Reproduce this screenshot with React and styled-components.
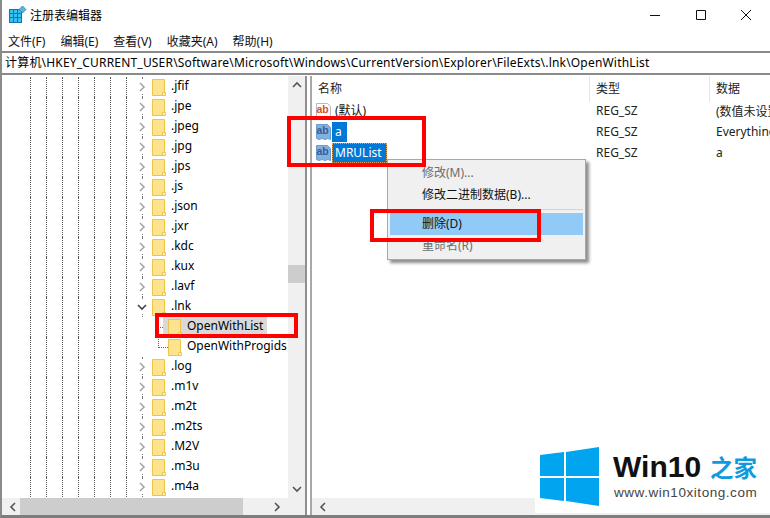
import React from "react";
import styled, { createGlobalStyle } from "styled-components";

const Global = createGlobalStyle`
  html, body { margin: 0; padding: 0; background: #fff; }
  body { font-family: "Open Sans", "Noto Sans CJK SC", sans-serif; font-size: 12px; color: #000; overflow: hidden; }
`;
const cjk = `"Noto Sans", "Noto Sans CJK SC", sans-serif`;

const Window = styled.div`
  position: relative; width: 770px; height: 518px; box-sizing: border-box; overflow: hidden;
  display: flex; flex-direction: column; background: #fff;
  border-left: 2px solid #8a8a8a; border-bottom: 3px solid #7d7d7d;
  font-family: ${cjk};
`;
const TitleBar = styled.div`display: flex; align-items: center; height: 30px; flex: none; padding: 0 1px 0 7px;`;
const AppTitle = styled.div`margin-left: 3px; font-size: 12px; flex: 1;`;
const WinBtn = styled.div`width: 45.5px; height: 30px; display: flex; align-items: center; justify-content: center;`;
const MenuBar = styled.div`display: flex; height: 21px; flex: none; align-items: center; padding-left: 6px; gap: 15px; font-size: 12px;`;
const MenuItem = styled.span`color: #111;`;
const Address = styled.div`
  flex: none; height: 20px; margin: 0 0 1px -2px; padding-left: 5px; line-height: 19px; font-size: 12px; white-space: nowrap;
  border-top: 2px solid #8a8a8a; border-bottom: 2px solid #8a8a8a; background: #fff; letter-spacing: .19px;
`;
const Panes = styled.div`flex: 1; display: flex; min-height: 0;`;
const Left = styled.div`width: 303px; flex: none; display: grid; grid-template-columns: 1fr 17px; grid-template-rows: 1fr 17px; border-right: 2px solid #8f8f8f;`;
const Tree = styled.div`overflow: hidden; padding-top: 1px; background: #fff;`;
const TreeRow = styled.div`display: flex; height: 20px; align-items: center; white-space: nowrap; overflow: hidden;`;
const Guide = styled.span`flex: none; width: 16px; height: 20px; box-sizing: border-box; border-left: 1px dotted #555; margin-left: ${p => p.$first ? "28px" : "0"};`;
const Chevron = styled.span`
  flex: none; position: relative; width: 20px; height: 20px; display: flex; align-items: center; justify-content: center; margin-left: -10px;
  &::before { content: ""; position: absolute; left: 10px; top: 0; bottom: 0; border-left: 1px dotted #777; }
  svg { position: relative; background: #fff; padding: 2px 1px; }
`;
const Folder = styled.svg`flex: none; width: 14px; height: 17px;`;
const Label = styled.span`margin-left: 3px; padding: 0 4px 2px 2px; line-height: 18px; font-size: 12px;`;
const Entry = styled.span`display: flex; align-items: center; height: 20px; padding-left: ${p => p.$sel ? "5px" : "0"}; background: ${p => p.$sel ? "#d9d9d9" : "transparent"};`;
const Branch = styled.span`flex: none; align-self: flex-start; box-sizing: border-box; height: 11px; width: ${p => p.$w}px; margin-left: 16px; border-left: 1px dotted #666; border-bottom: 1px dotted #666;`;
const VScroll = styled.div`background: #f0f0f0; display: flex; flex-direction: column; align-items: center; justify-content: space-between; position: relative; padding: 4px 0;`;
const Thumb = styled.div`position: absolute; left: 0; right: 0; top: 189px; height: 18px; background: #cdcdcd;`;
const HScroll = styled.div`background: #f0f0f0; display: flex; align-items: center; justify-content: space-between; padding: 0 6px; position: relative;`;
const HThumb = styled.div`position: absolute; left: 18px; top: 0; bottom: 0; width: ${p => p.$w}px; background: #cdcdcd;`;
const Corner = styled.div`background: #f0f0f0;`;
const Right = styled.div`flex: 1; display: flex; flex-direction: column; margin-left: 3px; border-left: 2px solid #a8a8a8; min-width: 0;`;
const Header = styled.div`display: grid; grid-template-columns: 278px 120px 1fr; height: 24px; flex: none; align-items: center; font-size: 12px; color: #222;`;
const HeadCell = styled.div`padding-left: 6px; height: 100%; line-height: 26px; border-right: ${p => p.$last ? 0 : "1px solid #e5e5e5"};`;
const Rows = styled.div`flex: 1;`;
const DataRow = styled.div`display: grid; grid-template-columns: 278px 120px 1fr; height: 21px; align-items: center; font-size: 12px; white-space: nowrap; overflow: hidden;`;
const NameCell = styled.div`display: flex; align-items: center; padding-left: 4px; height: 21px;`;
const Name = styled.span`margin-left: 1px; padding: 0 5px 0 3px; line-height: 20px; height: 20px; background: ${p => p.$sel ? "#0078d7" : "transparent"}; color: ${p => p.$sel ? "#fff" : "#111"}; outline: ${p => p.$focus ? "1px dotted #e8a04c" : "none"}; outline-offset: -1px;`;
const Cell = styled.div`padding-left: 6px; color: #222;`;
const RightBar = styled.div`height: 17px; flex: none; background: #f0f0f0; display: flex; align-items: center; padding-left: 6px;`;

const Menu = styled.div`position: absolute; left: 385px; top: 159px; width: 199px; height: 101px; box-sizing: border-box; background: #f0f0f0; border: 1px solid #a8a8a8; box-shadow: 3px 3px 3px rgba(0,0,0,.45); padding: 2px; font-size: 12px;`;
const Item = styled.div`height: 22px; line-height: 22px; padding-left: 32px; color: ${p => p.$off ? "#6d6d6d" : "#111"}; background: ${p => p.$on ? "#91c9f7" : "transparent"};`;
const Sep = styled.div`height: 1px; background: #d4d4d4; margin: 3px 0;`;
const Mark = styled.div`position: absolute; left: ${p => p.$x}px; top: ${p => p.$y}px; width: ${p => p.$w}px; height: ${p => p.$h}px; box-sizing: border-box; border: 4px solid #f00;`;

const Logo = styled.div`position: absolute; right: 0; bottom: 2px; width: 235px; height: 83px; background: #fff; display: flex; align-items: flex-start; gap: 14px; padding: 17px 0 0 5px; box-sizing: border-box;`;
const Brand = styled.div`display: flex; flex-direction: column; margin-top: 3px;`;
const BrandTop = styled.div`display: flex; align-items: baseline; gap: 9px; line-height: 32px;`;
const Win = styled.span`font: 700 30px "Liberation Sans", sans-serif; color: #111;`;
const Zh = styled.span`font: 700 23.5px "Noto Sans CJK SC", sans-serif; color: #0f9ae0;`;
const Url = styled.div`font: 13.5px "Liberation Sans", sans-serif; color: #444; margin: 1px 0 0 1px; letter-spacing: .55px;`;

const Ch = ({ d = "r", c = "#a6a6a6" }) => (
  <svg width="10" height="10" viewBox="0 0 10 10" fill="none" stroke={c} strokeWidth="1.6">
    <path d={{ r: "M3 1L7 5 3 9", d: "M1 3L5 7 9 3", u: "M1 7L5 3 9 7", l: "M7 1L3 5 7 9" }[d]} />
  </svg>
);
const FolderIcon = () => (
  <Folder viewBox="0 0 14 17">
    <path d="M.5.5h12v16H.5z" fill="#fde28f" stroke="#eec643" />
    <path d="M10.500 16.500v-3h3v3z" fill="#fff3c4" stroke="#eec643" />
  </Folder>
);
const RegIcon = ({ blue }) => (
  <svg width="15" height="18" viewBox="0 0 15 18" style={{ flex: "none" }}>
    <path d="M.5 1.500h11l3 3v12l-2.500-1-3 1-3-1-3 1-2.500-1z" fill={blue ? "#7fb2e0" : "#fff"} stroke={blue ? "#6d9ccb" : "#b9b9b9"} />
    <text x="0.500" y="11" fontFamily="Liberation Sans" fontWeight="700" fontSize="10.500" fill={blue ? "#3c5a94" : "#d8502a"}>ab</text>
  </svg>
);

const names = [".jfif", ".jpe", ".jpeg", ".jpg", ".jps", ".js", ".json", ".jxr", ".kdc", ".kux", ".lavf", ".lnk", "OpenWithList", "OpenWithProgids", ".log", ".m1v", ".m2t", ".m2ts", ".M2V", ".m3u", ".m4a"];
const guides = [0, 1, 2, 3, 4, 5, 6];

export default function App() {
  return (
    <Window>
      <Global />
      <TitleBar>
        <svg width="18" height="18" viewBox="0 0 18 18">
          <path d="M0 3h13v14H0z" fill="#1d6fa8" />
          <g fill="#35c2f5">
            <rect x="1" y="4" width="3" height="3" /><rect x="5" y="4" width="3" height="3" /><rect x="9" y="4" width="3" height="3" />
            <rect x="1" y="8" width="3" height="3" /><rect x="5" y="8" width="3" height="3" /><rect x="9" y="8" width="3" height="3" />
            <rect x="1" y="12" width="3" height="4" /><rect x="5" y="12" width="3" height="4" /><rect x="9" y="12" width="3" height="4" />
          </g>
          <path d="M13.500 0l3.500 3.500-3.500 3.500L10 3.500z" fill="#5fb4dd" stroke="#2a7fb8" strokeWidth=".8" />
        </svg>
        <AppTitle>注册表编辑器</AppTitle>
        <WinBtn><svg width="10" height="10"><path d="M0 5.500h10" stroke="#111" /></svg></WinBtn>
        <WinBtn><svg width="10" height="10"><path d="M.5.5h9v9h-9z" stroke="#111" fill="none" /></svg></WinBtn>
        <WinBtn><svg width="10" height="10"><path d="M0 0l10 10M10 0L0 10" stroke="#111" fill="none" /></svg></WinBtn>
      </TitleBar>
      <MenuBar>
        {["文件(F)", "编辑(E)", "查看(V)", "收藏夹(A)", "帮助(H)"].map(m => <MenuItem key={m}>{m}</MenuItem>)}
      </MenuBar>
      <Address>计算机\HKEY_CURRENT_USER\Software\Microsoft\Windows\CurrentVersion\Explorer\FileExts\.lnk\OpenWithList</Address>
      <Panes>
        <Left>
          <Tree>
            {names.map((n) => {
              const sub = n.startsWith("Open");
              const sel = n === "OpenWithList";
              return (
                <TreeRow key={n}>
                  {guides.map(g => <Guide key={g} $first={g === 0} />)}
                  {sub
                    ? <Branch $w={sel ? 5 : 10} />
                    : <Chevron><Ch d={n === ".lnk" ? "d" : "r"} c={n === ".lnk" ? "#444" : "#a6a6a6"} /></Chevron>}
                  <Entry $sel={sel}>
                    <FolderIcon />
                    <Label>{n}</Label>
                  </Entry>
                </TreeRow>
              );
            })}
          </Tree>
          <VScroll><Ch d="u" c="#555" /><Thumb /><Ch d="d" c="#555" /></VScroll>
          <HScroll><Ch d="l" c="#555" /><HThumb $w={223} /><Ch d="r" c="#555" /></HScroll>
          <Corner />
        </Left>
        <Right>
          <Header>
            <HeadCell>名称</HeadCell>
            <HeadCell>类型</HeadCell>
            <HeadCell $last>数据</HeadCell>
          </Header>
          <Rows>
            <DataRow><NameCell><RegIcon /><Name>(默认)</Name></NameCell><Cell>REG_SZ</Cell><Cell>(数值未设置)</Cell></DataRow>
            <DataRow><NameCell><RegIcon blue /><Name $sel>a</Name></NameCell><Cell>REG_SZ</Cell><Cell>Everything</Cell></DataRow>
            <DataRow><NameCell><RegIcon blue /><Name $sel $focus>MRUList</Name></NameCell><Cell>REG_SZ</Cell><Cell>a</Cell></DataRow>
          </Rows>
          <RightBar><Ch d="l" c="#555" /></RightBar>
        </Right>
      </Panes>
      <Menu>
        <Item $off>修改(M)...</Item>
        <Item>修改二进制数据(B)...</Item>
        <Sep />
        <Item $on>删除(D)</Item>
        <Item $off>重命名(R)</Item>
      </Menu>
      <Mark $x={285} $y={116} $w={139} $h={51} />
      <Mark $x={368} $y={209} $w={171} $h={33} />
      <Mark $x={153} $y={313} $w={143} $h={25} />
      <Logo>
        <svg width="59" height="59" viewBox="0 0 59 59" style={{ flex: "none" }}>
          <path d="M0 8l24-3v24H0zM26 5L59 0v29H26zM0 31h24v23L0 51zM26 31h33v28L26 54z" fill="#00a4ef" />
        </svg>
        <Brand>
          <BrandTop><Win>Win10</Win><Zh>之家</Zh></BrandTop>
          <Url>www.win10xitong.com</Url>
        </Brand>
      </Logo>
    </Window>
  );
}
